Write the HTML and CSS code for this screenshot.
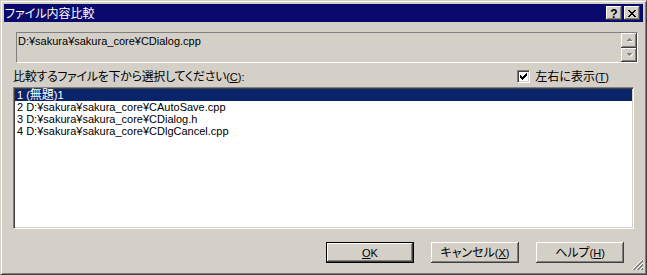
FILE: index.html
```html
<!DOCTYPE html>
<html lang="ja">
<head>
<meta charset="utf-8">
<title>ファイル内容比較</title>
<link rel="stylesheet" href="styles.css">
</head>
<body>
<div class="window">
  <div class="titlebar">
    <span class="title"><span class="j">ファイル内容比較</span></span>
    <div class="caption-btns">
      <div class="cbtn cbtn-help">?</div>
      <div class="cbtn cbtn-close">
        <svg width="8" height="7" viewBox="0 0 8 7" shape-rendering="crispEdges"><path fill="#000" d="M0 0h2v1h-2z M6 0h2v1h-2z M1 1h2v1h-2z M5 1h2v1h-2z M2 2h4v1h-4z M3 3h2v1h-2z M2 4h4v1h-4z M1 5h2v1h-2z M5 5h2v1h-2z M0 6h2v1h-2z M6 6h2v1h-2z"/></svg>
      </div>
    </div>
  </div>
  <div class="client">
    <div class="pathbox">
      <span class="pathtext">D:¥sakura¥sakura_core¥CDialog.cpp</span>
      <div class="vscroll">
        <div class="sbtn">
          <svg width="7" height="5" viewBox="0 0 7 5" shape-rendering="crispEdges"><path fill="#fff" d="M4 1h1v1h1v1h1v1h-4z"/><path fill="#808080" d="M3 0h1v1h1v1h1v1h-5v-1h1v-1h1z"/></svg>
        </div>
        <div class="sbtn">
          <svg width="7" height="5" viewBox="0 0 7 5" shape-rendering="crispEdges"><path fill="#fff" d="M2 2h5v1h-1v1h-1v1h-1v-1h-1z"/><path fill="#808080" d="M1 1h5v1h-1v1h-1v1h-1v-1h-1v-1h-1z"/></svg>
        </div>
      </div>
    </div>
    <div class="labelrow">
      <span class="label"><span class="j tight">比較するファイルを下から選択してください</span>(<u>C</u>):</span>
      <div class="check">
        <span class="checkbox">
          <svg width="7" height="7" viewBox="0 0 7 7" shape-rendering="crispEdges"><path fill="#000" d="M6 0h1v3h-1v1h-1v1h-1v1h-1v1h-1v-1h-1v-1h-1v-3h1v1h1v1h1v-1h1v-1h1z"/></svg>
        </span>
        <span class="checklabel"><span class="j">左右に表示</span>(<u>T</u>)</span>
      </div>
    </div>
    <ul class="list">
      <li class="item selected">1 (<span class="j">無題</span>)1</li>
      <li class="item">2 D:¥sakura¥sakura_core¥CAutoSave.cpp</li>
      <li class="item">3 D:¥sakura¥sakura_core¥CDialog.h</li>
      <li class="item">4 D:¥sakura¥sakura_core¥CDlgCancel.cpp</li>
    </ul>
    <div class="btnrow">
      <div class="btn btn-default"><span><u>O</u>K</span></div>
      <div class="btn"><span><span class="j">キャンセル</span>(<u>X</u>)</span></div>
      <div class="btn"><span><span class="j">ヘルプ</span>(<u>H</u>)</span></div>
    </div>
  </div>
  <div class="grip">
    <svg width="12" height="12" viewBox="0 0 12 12">
      <g stroke-width="1" shape-rendering="crispEdges">
        <path stroke="#fff" d="M11.5 0.5 L0.5 11.5"/>
        <path stroke="#808080" d="M11.5 1.5 L1.5 11.5 M11.5 2.5 L2.5 11.5"/>
        <path stroke="#fff" d="M11.5 4.5 L4.5 11.5"/>
        <path stroke="#808080" d="M11.5 5.5 L5.5 11.5 M11.5 6.5 L6.5 11.5"/>
        <path stroke="#fff" d="M11.5 8.5 L8.5 11.5"/>
        <path stroke="#808080" d="M11.5 9.5 L9.5 11.5 M11.5 10.5 L10.5 11.5"/>
      </g>
    </svg>
  </div>
</div>
</body>
</html>
```

FILE: styles.css
```css
* { box-sizing: border-box; }
html, body { margin: 0; padding: 0; }
body {
  width: 647px;
  height: 275px;
  overflow: hidden;
  background: #d4d0c8;
  font-family: "Liberation Sans", "Noto Sans CJK JP", sans-serif;
  font-size: 11px;
  color: #000;
}
.j {
  font-family: "Noto Sans CJK JP", sans-serif;
  font-size: 12px;
  font-feature-settings: "palt";
  line-height: 0;
}
.tight { letter-spacing: -0.3px; }
u { text-decoration: underline; text-underline-offset: 1px; }

.window {
  position: relative;
  width: 647px;
  height: 275px;
  background: #d4d0c8;
  border-top: 1px solid #d4d0c8;
  border-left: 1px solid #d4d0c8;
  border-right: 1px solid #404040;
  border-bottom: 1px solid #404040;
  box-shadow: inset 1px 1px #fff, inset -1px -1px #808080;
  padding: 3px;
  display: flex;
  flex-direction: column;
}

.titlebar {
  height: 18px;
  flex: none;
  background: #0a0a6c;
  display: flex;
  align-items: center;
  padding: 0 3px 0 1px;
  color: #fff;
}
.title { flex: 1; line-height: 18px; padding-top: 1px; }
.caption-btns { display: flex; gap: 2px; }
.cbtn {
  width: 16px;
  height: 14px;
  background: #d4d0c8;
  box-shadow: inset -1px -1px #404040, inset 1px 1px #fff, inset -2px -2px #808080;
  display: flex;
  align-items: center;
  justify-content: center;
}
.cbtn-help {
  font-family: "Liberation Sans", sans-serif;
  font-weight: bold;
  font-size: 12px;
  line-height: 14px;
  padding-top: 1px;
  color: #000;
}
.cbtn-close svg { display: block; }

.client {
  flex: 1;
  display: flex;
  flex-direction: column;
}

.pathbox {
  margin: 10px 5px 0 12px;
  height: 31px;
  flex: none;
  border-top: 1px solid #808080;
  border-left: 1px solid #808080;
  border-right: 1px solid #fff;
  border-bottom: 1px solid #fff;
  display: flex;
  align-items: flex-start;
}
.pathtext { flex: 1; padding: 2px 0 0 1px; line-height: 13px; }
.vscroll {
  width: 16px;
  height: 29px;
  display: flex;
  flex-direction: column;
}
.sbtn {
  flex: 1;
  background: #d4d0c8;
  box-shadow: inset -1px -1px #404040, inset 1px 1px #fff, inset -2px -2px #808080;
  display: flex;
  align-items: center;
  justify-content: center;
}
.sbtn svg { display: block; }

.labelrow {
  margin: 5px 0 0 9px;
  height: 16px;
  flex: none;
  display: flex;
  align-items: center;
}
.label { flex: 1; line-height: 16px; padding-top: 1px; }
.check {
  display: flex;
  align-items: center;
  margin-right: 34px;
}
.checkbox {
  width: 13px;
  height: 13px;
  background: #fff;
  border-top: 1px solid #808080;
  border-left: 1px solid #808080;
  border-right: 1px solid #fff;
  border-bottom: 1px solid #fff;
  box-shadow: inset 1px 1px #404040, inset -1px -1px #d4d0c8;
  display: flex;
  align-items: center;
  justify-content: center;
  margin-right: 5px;
}
.checkbox svg { display: block; }
.checklabel { line-height: 16px; padding-top: 1px; }

.list {
  list-style: none;
  margin: 3px 9px 0 9px;
  height: 142px;
  flex: none;
  background: #fff;
  border-top: 1px solid #808080;
  border-left: 1px solid #808080;
  border-right: 1px solid #fff;
  border-bottom: 1px solid #fff;
  box-shadow: inset 1px 1px #404040, inset -1px -1px #d4d0c8;
  padding: 1px;
}
.item {
  height: 12px;
  line-height: 12px;
  padding-left: 2px;
  white-space: nowrap;
}
.item.selected { background: #0a246a; color: #fff; }

.btnrow {
  margin-top: 13px;
  display: flex;
  justify-content: flex-end;
  gap: 17px;
  padding-right: 19px;
}
.btn {
  width: 88px;
  height: 21px;
  background: #d4d0c8;
  box-shadow: inset -1px -1px #404040, inset 1px 1px #fff, inset -2px -2px #808080;
  display: flex;
  align-items: center;
  justify-content: center;
  line-height: 14px;
  padding-top: 1px;
}
.btn-default {
  border: 1px solid #000;
}

.grip {
  position: absolute;
  right: 3px;
  bottom: 3px;
  width: 12px;
  height: 12px;
}
.grip svg { display: block; }
```
